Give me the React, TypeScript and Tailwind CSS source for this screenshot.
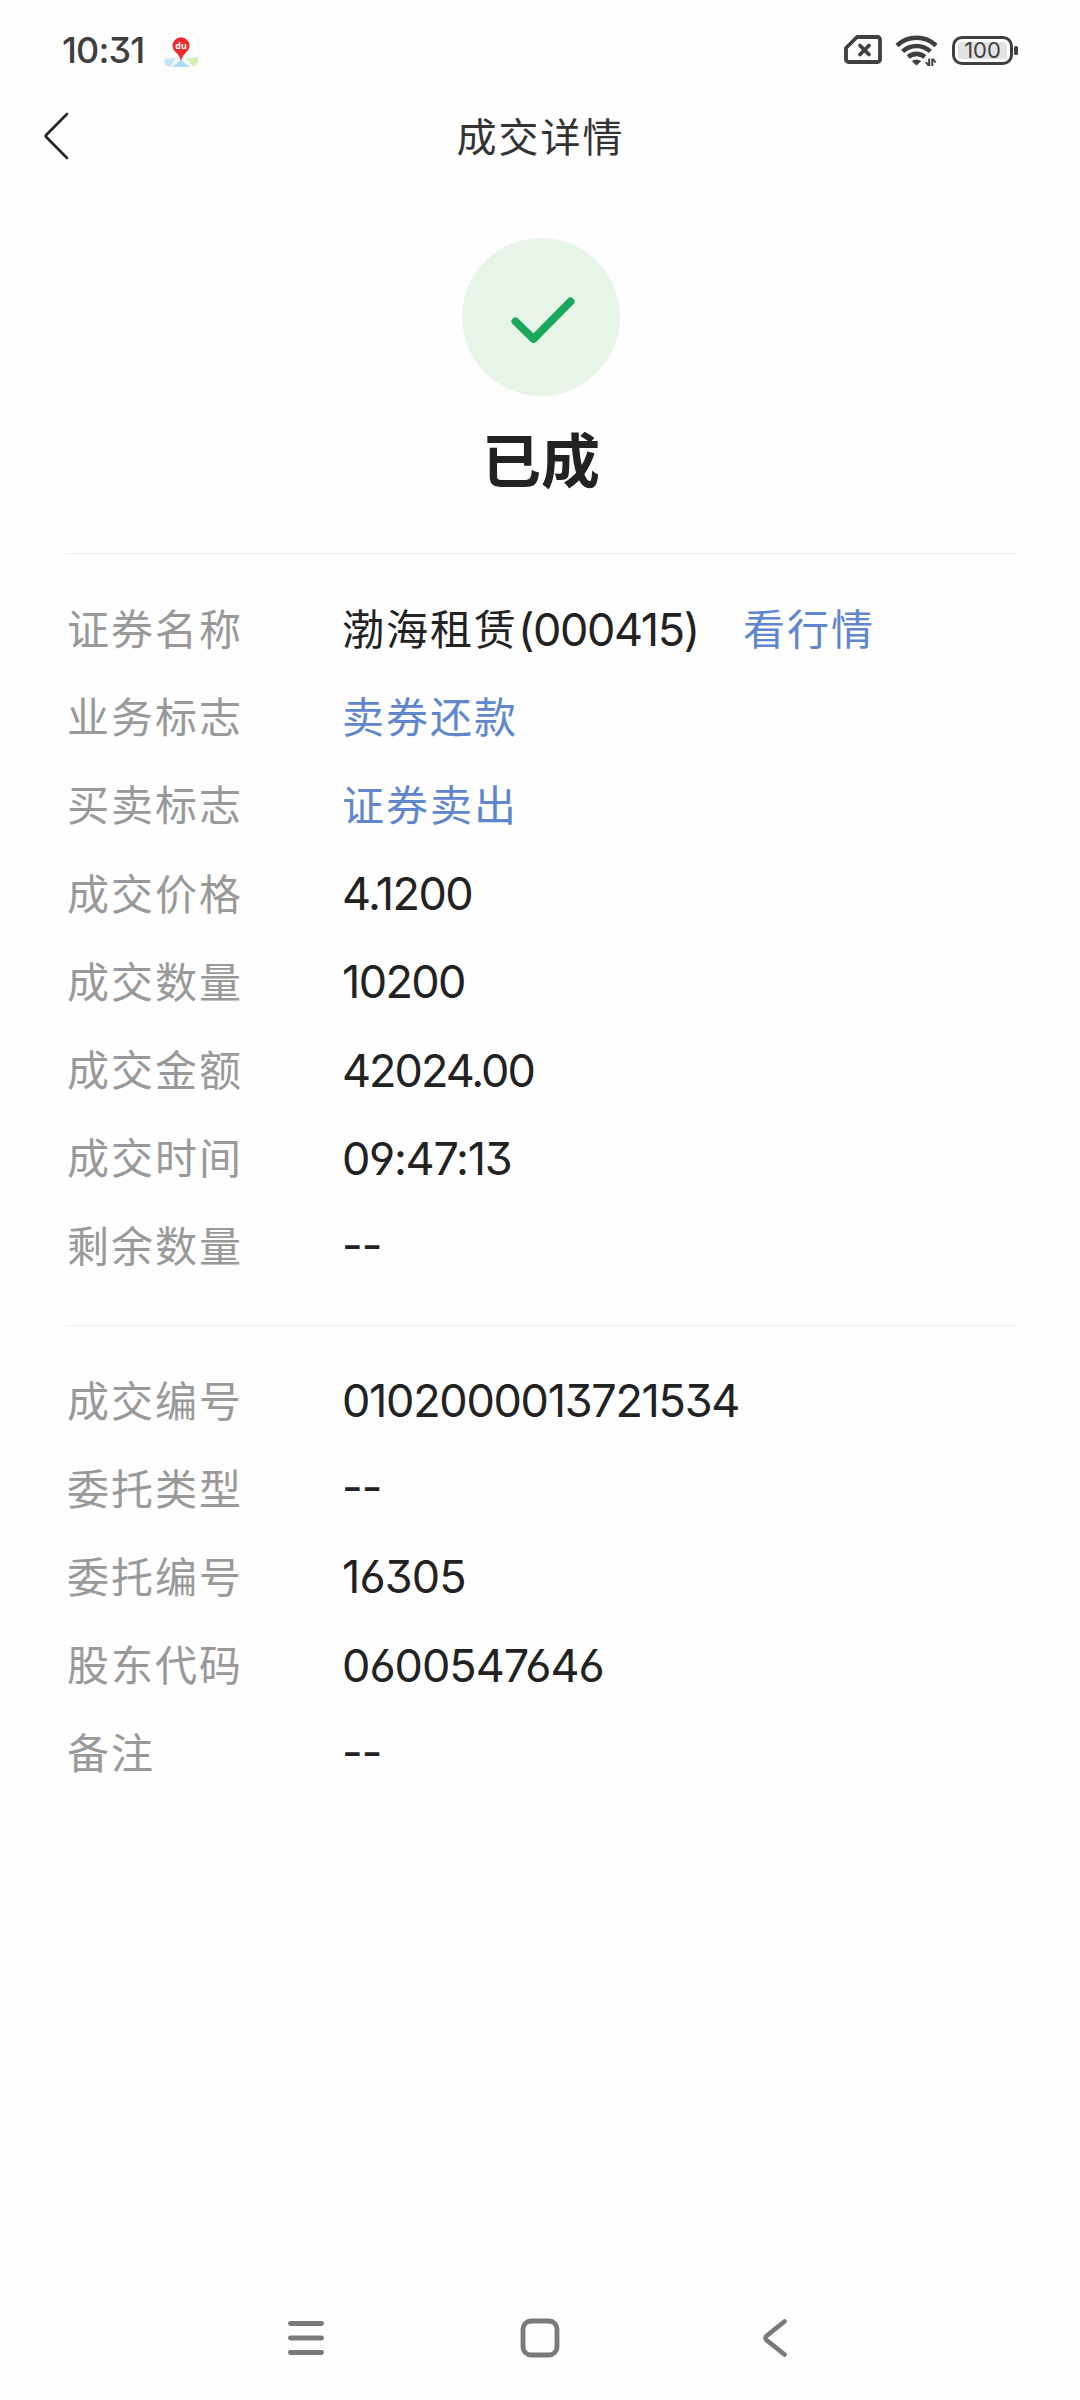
import React from 'react';

interface DetailItem {
  label: string;
  value: string;
  tracking?: string;
  isLink?: boolean;
  action?: string;
}

const tradeItems: DetailItem[] = [
  { label: '证券名称', value: '渤海租赁', action: '看行情' },
  { label: '业务标志', value: '卖券还款', isLink: true },
  { label: '买卖标志', value: '证券卖出', isLink: true },
  { label: '成交价格', value: '4.1200', tracking: 'tracking-[-1.5px]' },
  { label: '成交数量', value: '10200', tracking: 'tracking-[-1.6px]' },
  { label: '成交金额', value: '42024.00', tracking: 'tracking-[-2px]' },
  { label: '成交时间', value: '09:47:13', tracking: 'tracking-[-1.3px]' },
  { label: '剩余数量', value: '--' },
];

const orderItems: DetailItem[] = [
  { label: '成交编号', value: '0102000013721534', tracking: 'tracking-[-1.3px]' },
  { label: '委托类型', value: '--' },
  { label: '委托编号', value: '16305', tracking: 'tracking-[-0.9px]' },
  { label: '股东代码', value: '0600547646', tracking: 'tracking-[-1px]' },
  { label: '备注', value: '--' },
];

const isNumeric = (value: string) => /^[\d.:-]+$/.test(value);

const NUMBER_FONT = "font-['Inter','Noto_Sans_CJK_SC',sans-serif] [font-feature-settings:'cv03','cv04','cv09'] text-[45px]";

const MapAppIcon = () => (
  <svg className="block h-[34px] w-[34px]" viewBox="0 0 34 34">
    <clipPath id="tile">
      <rect width="34" height="34" rx="7" />
    </clipPath>
    <rect x="0.25" y="0.25" width="33.5" height="33.5" rx="7" fill="#fff" stroke="#ececec" strokeWidth="0.5" />
    <g clipPath="url(#tile)">
      <path d="M0 24h34v10H0z" fill="#f3f8f6" />
      <path d="M0 27l12-2-6 9H0z" fill="#c0e4f8" />
      <path d="M17 27l9 7H8z" fill="#abdcf8" />
      <path d="M22 25l12-1v10h-4z" fill="#d2efb8" />
    </g>
    <path d="M17 28c-1-3-1.600-5-4.500-8A8.500 8.500 0 1 1 21.500 20c-2.900 3-3.500 5-4.500 8z" fill="#ee2a2f" />
    <text x="17" y="16" textAnchor="middle" fontSize="9" fontWeight="700" fontFamily="Open Sans, sans-serif" fill="#fff">du</text>
  </svg>
);

const NoSimIcon = () => (
  <svg className="block h-[30px] w-[38px]" viewBox="0 0 38 30" fill="none" stroke="#3f3f3f" strokeLinejoin="round" strokeLinecap="round">
    <path d="M13 2h20.500a2.500 2.500 0 0 1 2.500 2.500v20a2.500 2.500 0 0 1-2.500 2.500H4.500A2.500 2.500 0 0 1 2 24.500V13z" strokeWidth="3.800" />
    <path d="M16 10.500l9 9M25 10.500l-9 9" strokeWidth="3.800" />
  </svg>
);

const WifiIcon = () => (
  <svg className="block h-[32px] w-[44px]" viewBox="0 0 44 32" fill="none" stroke="#3f3f3f">
    <path d="M2 11.500a28.500 28.500 0 0 1 39 0" strokeWidth="4.600" />
    <path d="M7.600 17.400a20.500 20.500 0 0 1 27.800 0" strokeWidth="4.600" />
    <path d="M13.200 23a12.500 12.500 0 0 1 16.600 0" strokeWidth="4.600" />
    <path d="M21.500 31.500l-4.600-4.200a6.500 6.500 0 0 1 9.200 0z" fill="#3f3f3f" stroke="none" />
    <path d="M34.200 24.500v7.500M30.800 28l2.800 3.500M37.300 32v-7.500M40.700 28.500l-2.800-3.500" strokeWidth="2" />
  </svg>
);

const Battery = () => (
  <div className="flex items-center gap-px">
    <div className="h-[29px] w-[61px] rounded-[10px] border-[3px] border-[#3f3f3f] p-[3px]">
      <div className="flex h-full items-center justify-center rounded-[4px] bg-[#e2e2e2] font-['Inter',sans-serif] text-[22px] leading-none text-[#3f3f3f]">
        100
      </div>
    </div>
    <div className="h-[9px] w-[4px] rounded-[1.5px] bg-[#3f3f3f]" />
  </div>
);

const StatusBar = () => (
  <div className="flex h-[100px] items-center justify-between pl-[62px] pr-[62px]">
    <div className="flex items-center gap-[20px]">
      <span className="w-[82px] whitespace-nowrap font-['Inter',sans-serif] text-[36px] font-medium leading-none tracking-[-0.9px] text-[#3f3f3f] [font-feature-settings:'cv09']">
        10:31
      </span>
      <MapAppIcon />
    </div>
    <div className="flex items-center gap-[13px]">
      <NoSimIcon />
      <WifiIcon />
      <Battery />
    </div>
  </div>
);

const Header = () => (
  <header className="grid h-[72px] grid-cols-[1fr_auto_1fr] items-center">
    <button className="pl-[43px]">
      <svg className="block h-[48px] w-[28px]" viewBox="0 0 28 48" fill="none" stroke="#222" strokeWidth="2.600" strokeLinecap="round" strokeLinejoin="round">
        <path d="M24 2L3.200 23q-1 1 0 2L24 46" />
      </svg>
    </button>
    <h1 className="pb-[3px] pl-px text-[40px] leading-none tracking-[2px] text-[#333]">成交详情</h1>
  </header>
);

const Status = () => (
  <div className="flex flex-col items-center pl-[2px] pt-[66px]">
    <div className="h-[158px] w-[158px] rounded-full bg-[#e7f5e9]">
      <svg className="block" viewBox="0 0 158 158" fill="none" stroke="#1aa85b" strokeWidth="8" strokeLinecap="round" strokeLinejoin="round">
        <path d="M53.500 83.500l18 17.500 37-37.500" />
      </svg>
    </div>
    <p className="mt-[32px] h-[125px] text-[59px] font-bold leading-[60px] text-[#222]">已成</p>
  </div>
);

const DetailRow: React.FC<{ item: DetailItem }> = ({ item }) => (
  <div className="flex h-[88.2px] items-center whitespace-nowrap text-[42px] leading-none tracking-[2px]">
    <span className="w-[275px] pb-[6px] text-[#999]">{item.label}</span>
    {item.value === '--' ? (
      <span className={`${NUMBER_FONT} pb-[6px] tracking-[-1px] text-[#222]`}>{item.value}</span>
    ) : isNumeric(item.value) ? (
      <span className={`${NUMBER_FONT} ${item.tracking} pb-[2px] text-[#222]`}>{item.value}</span>
    ) : (
      <span className={`pb-[6px] ${item.isLink ? 'text-[#6086ce]' : 'text-[#222]'}`}>{item.value}</span>
    )}
    {item.action && (
      <>
        <span className={`${NUMBER_FONT} w-[183px] pb-[2px] tracking-[-1.4px] text-[#222]`}>(000415)</span>
        <button className="ml-[42px] pb-[6px] text-[#6086ce]">{item.action}</button>
      </>
    )}
  </div>
);

const DetailSection: React.FC<{ items: DetailItem[] }> = ({ items }) => (
  <section className="ml-[66px] mr-[64px] border-t border-[#eee] pb-[33px] pt-[32px] pl-px">
    {items.map((item) => (
      <DetailRow key={item.label} item={item} />
    ))}
  </section>
);

const NavBar = () => (
  <nav className="mt-auto flex h-[125px] items-center pl-[286px]">
    <svg className="block h-[40px] w-[40px]" viewBox="0 0 40 40" stroke="#7a7a7a" strokeWidth="4.800" strokeLinecap="round">
      <path d="M4.400 5.500h31.200M4.400 20h31.200M4.400 34.500h31.200" />
    </svg>
    <svg className="ml-[194px] block h-[40px] w-[40px]" viewBox="0 0 40 40" fill="none" stroke="#7a7a7a" strokeWidth="4.800">
      <rect x="3" y="3" width="34" height="34" rx="8" />
    </svg>
    <svg className="ml-[201px] block h-[40px] w-[28px]" viewBox="0 0 28 40" fill="none" stroke="#7a7a7a" strokeWidth="4.800" strokeLinecap="round">
      <path d="M23.500 3.500L6 17.500q-3 2.500 0 5L23.500 36.500" />
    </svg>
  </nav>
);

export default function App() {
  return (
    <div className="flex h-[2400px] w-[1080px] flex-col overflow-hidden bg-[#fefefe] font-['Noto_Sans_CJK_SC',sans-serif]">
      <StatusBar />
      <Header />
      <Status />
      <DetailSection items={tradeItems} />
      <DetailSection items={orderItems} />
      <NavBar />
    </div>
  );
}
